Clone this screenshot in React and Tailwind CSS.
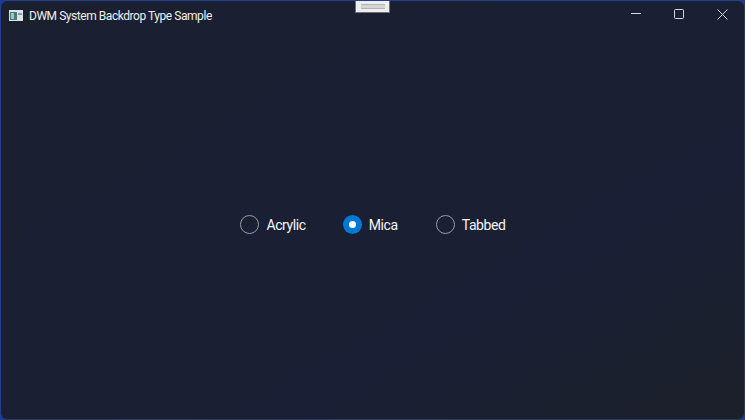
import React from "react";

function Radio({ label, checked, className }) {
  return (
    <div className={`flex items-center gap-[7px] ${className || ""}`}>
      {checked ? (
        <span className="flex h-[19px] w-[19px] items-center justify-center rounded-full bg-[#0078d4]">
          <span className="h-[7px] w-[7px] rounded-full bg-white" />
        </span>
      ) : (
        <span className="h-[19px] w-[19px] rounded-full border border-[#9a9ca3]" />
      )}
      <span className="text-[14px] leading-5 tracking-[-0.4px] text-[#f4f5f6]">{label}</span>
    </div>
  );
}

export default function App() {
  return (
    <div className="h-[420px] w-[745px] overflow-hidden bg-[#1b3a9a] font-['Roboto','Noto_Sans',sans-serif]">
      <div className="relative flex h-full w-full flex-col overflow-hidden rounded-[7px] border border-[#23408f] border-b-[#2a3a5e] border-r-[#2a3a5e] bg-gradient-to-br from-[#1a2030] via-[#1a1f35] via-70% to-[#1c2029]">
        <div className="flex h-[29px] shrink-0 items-center pl-[8px]">
          <svg width="14" height="11" viewBox="0 0 14 11" className="mr-[6px] shrink-0">
            <rect width="14" height="11" fill="#dfe3e6" />
            <rect x="1" y="2" width="7" height="8" fill="#3f7f78" />
            <rect x="2" y="3" width="3" height="6" fill="#9cc8bd" />
            <rect x="9" y="3" width="4" height="2" fill="#7f9cb0" />
          </svg>
          <span className="whitespace-nowrap text-[12px] leading-4 tracking-[-0.45px] text-[#eef0f2]">DWM System Backdrop Type Sample</span>
          <div className="ml-auto flex items-center self-start text-[#d6d8dc]">
            <span className="flex h-[26px] w-[44px] items-center justify-center">
              <svg width="10" height="10" viewBox="0 0 10 10" fill="none" stroke="currentColor">
                <path d="M0 4.5H10" />
              </svg>
            </span>
            <span className="flex h-[26px] w-[42px] items-center justify-center">
              <svg width="10" height="10" viewBox="0 0 10 10" fill="none" stroke="currentColor">
                <rect x="0.5" y="0.5" width="9" height="9" rx="1" />
              </svg>
            </span>
            <span className="flex h-[26px] w-[44px] items-center justify-center">
              <svg width="11" height="11" viewBox="0 0 11 11" fill="none" stroke="currentColor">
                <path d="M0.5 0.5L10.5 10.5M10.5 0.5L0.5 10.5" />
              </svg>
            </span>
          </div>
        </div>
        <div className="flex flex-1 items-center justify-center gap-[38px]">
          <Radio label="Acrylic" className="ml-[1px] mr-[-1px]" />
          <Radio label="Mica" checked />
          <Radio label="Tabbed" />
        </div>
        <div className="absolute left-[354px] top-[-1px] flex h-[13px] w-[35px] items-center justify-center border border-[#6b6f78] bg-[#eeeeee]">
          <div className="h-[5px] w-[24px] border-y border-[#b4b4b4] bg-[#d6d6d6]" />
        </div>
      </div>
    </div>
  );
}
